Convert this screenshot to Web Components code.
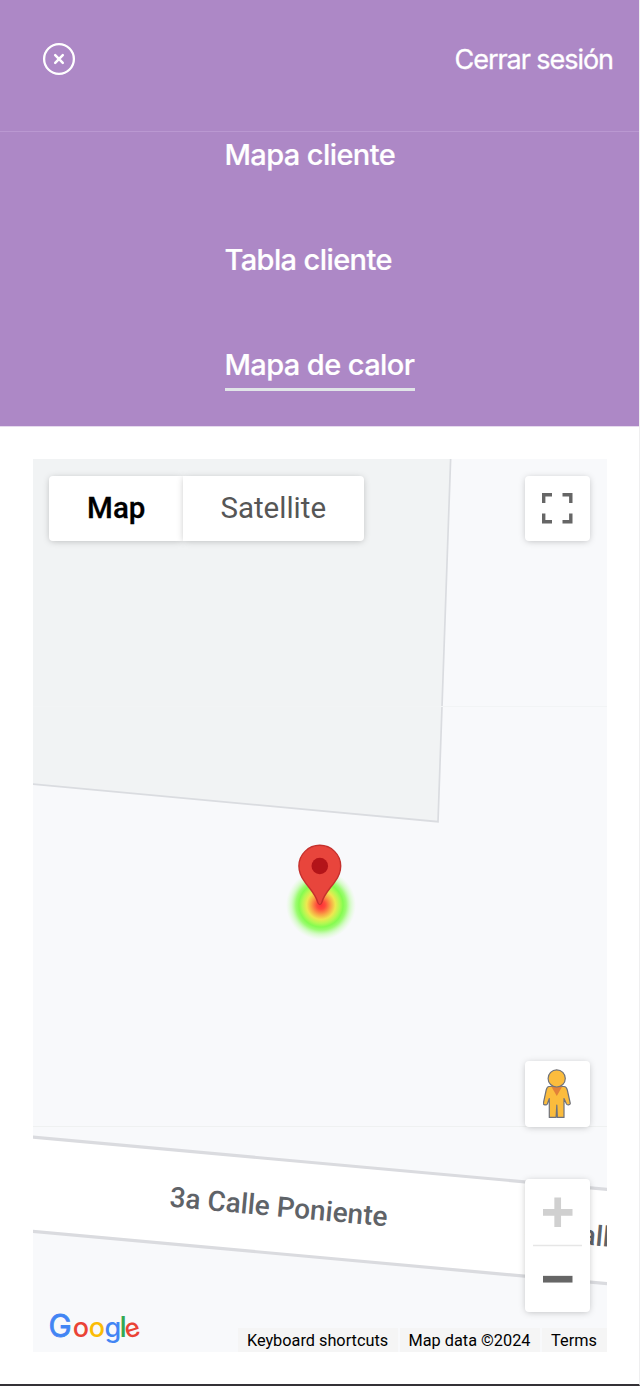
<!DOCTYPE html>
<html lang="es">
<head>
<meta charset="utf-8">
<title>Mapa de calor</title>
<style>
html, body { margin: 0; background: #fff; }
body { font-family: Inter, "Liberation Sans", sans-serif; }
</style>
</head>
<body>
<app-page>
  <app-header slot="header">Cerrar sesión</app-header>
  <app-nav slot="nav">
    <nav-item>Mapa cliente</nav-item>
    <nav-item>Tabla cliente</nav-item>
    <nav-item active>Mapa de calor</nav-item>
  </app-nav>
  <heat-map></heat-map>
</app-page>
<script>
function define(name, html) {
  const template = document.createElement('template');
  template.innerHTML = html;
  customElements.define(name, class extends HTMLElement {
    constructor() {
      super();
      this.attachShadow({ mode: 'open' }).append(template.content.cloneNode(true));
    }
  });
}

define('app-page', `
<style>
:host { display: flex; flex-direction: column; box-sizing: border-box; height: 1386px; overflow: hidden;
  background: #fff; border-right: 1px solid #efeff0; border-bottom: 2px solid #343136; }
.top { background: #ad88c6; margin-right: -1px; border-right: 1px solid #bb9bd0; height: 426px; border-bottom: 1px solid #e6daee; }
main { padding: 32px 32px 32px 33px; }
</style>
<div class="top"><slot name="header"></slot><slot name="nav"></slot></div>
<main><slot></slot></main>`);

define('app-header', `
<style>
:host { display: flex; box-sizing: border-box; height: 132px; padding: 42px 26px 0 42px; justify-content: space-between;
  align-items: flex-start; border-bottom: 1px solid #ba98d1; color: #fff; }
svg { display: block; }
.out { font-size: 27px; line-height: 34px; padding-top: 1px; letter-spacing: -1.05px; -webkit-text-stroke: .3px #fff; }
</style>
<svg width="34" height="34" viewBox="0 0 34 34" fill="none" stroke="#fff" stroke-linecap="round">
<circle cx="17" cy="17" r="14.9" stroke-width="2.3"/><path d="M13.2 13.2l7.6 7.6M20.8 13.2l-7.6 7.6" stroke-width="2.5"/></svg>
<span class="out"><slot></slot></span>`);

define('app-nav', `
<style>
:host { display: flex; flex-direction: column; align-items: flex-start; width: 190px; margin-left: 225px; gap: 58px; padding-top: 4px; }
</style><slot></slot>`);

define('nav-item', `
<style>
:host { display: block; box-sizing: border-box; height: 47px; padding-top: 1px; font-size: 29px; line-height: 36px; font-weight: 500;
  letter-spacing: -0.6px; text-indent: -.5px; white-space: nowrap; color: #fff; -webkit-text-stroke: .2px #fff; }
:host([active]) { width: 190px; height: 45px; border-bottom: 3px solid #e1e5e8; }
</style><slot></slot>`);

define('map-control', `
<style>
:host { display: flex; flex-direction: column; align-items: center; justify-content: center; box-sizing: border-box; width: 65px; height: 65px;
  background: #fff; border-radius: 4px; box-shadow: 0 1px 7px -1px rgba(0,0,0,.26); }
</style><slot></slot>`);

define('map-types', `
<style>
:host { display: flex; font: 29.5px/65px Roboto, sans-serif; color: #565656; height: 65px; }
span { box-sizing: border-box; background: #fff; box-shadow: 0 1px 7px -1px rgba(0,0,0,.26); text-align: center; }
.m { width: 133.5px; padding-left: 1px; color: #000; font-weight: 500; -webkit-text-stroke: .3px #000; border-radius: 4px 0 0 4px; }
.s { width: 181.5px; border-radius: 0 4px 4px 0; }
</style><span class="m">Map</span><span class="s">Satellite</span>`);

define('map-credits', `
<style>
:host { display: flex; gap: 2px; font: 16.3px/25px Roboto, sans-serif; color: #000; }
span { background: #f5f5f5; height: 24px; box-sizing: border-box; padding-right: 1px; text-align: center; white-space: nowrap; }
</style>
<span style="width:160px">Keyboard shortcuts</span><span style="width:140px">Map data ©2024</span><span style="width:65px">Terms</span>`);

define('map-canvas', `
<style>:host { display: block; } svg { display: block; }</style>
<svg width="574" height="893" viewBox="33 459 574 893">
<defs><radialGradient id="heat">
<stop offset="0" stop-color="#ff3038"/><stop offset=".12" stop-color="#ff4a3c"/><stop offset=".28" stop-color="#f9a545"/>
<stop offset=".41" stop-color="#eee850"/><stop offset=".53" stop-color="#b5f852"/><stop offset=".63" stop-color="#85fb50"/>
<stop offset=".72" stop-color="#90fc60" stop-opacity=".88"/><stop offset=".84" stop-color="#a5fc80" stop-opacity=".42"/><stop offset="1" stop-color="#c8ffb0" stop-opacity="0"/>
</radialGradient></defs>
<rect x="33" y="459" width="574" height="893" fill="#f8f9fb"/>
<path d="M31 457H450.7L438 821.7L31 784Z" fill="#f1f3f4" stroke="#dadce0" stroke-width="1.7"/>
<path d="M33 706.5H607" stroke="#f2f4f5"/><path d="M33 1126.5H607" stroke="#eff1f1"/>
<path d="M31 1137L609 1189.5V1283.8L31 1231.2Z" fill="#fff" stroke="#dadbdf" stroke-width="3.2"/>
<g font-family="Roboto, sans-serif" font-weight="500" font-size="28" fill="#5f6368">
<text transform="translate(169 1206.5) rotate(5.2)" textLength="218.5">3a Calle Poniente</text>
<text transform="translate(524 1239) rotate(5.2)" textLength="218.5">3a Calle Poniente</text></g>
<circle cx="321" cy="905" r="35" fill="url(#heat)"/>
<path d="M319.8 904.6C318.6 904.6 318.1 903.8 317.7 902.2C315.2 893.6 309.8 889 304.8 881.8C301.2 877.2 298.9 872 298.9 866A20.9 20.7 0 0 1 340.7 866C340.7 872 338.4 877.2 334.8 881.8C329.8 889 324.4 893.6 321.9 902.2C321.5 903.8 321 904.6 319.8 904.6Z" fill="#e8453c" stroke="#c5302c" stroke-width="1.4"/>
<circle cx="319.8" cy="866" r="8.3" fill="#b31419"/>
<text y="1337.3" font-family="Inter, sans-serif" font-size="27" font-weight="500"><tspan x="48.6" font-size="31" font-weight="400" fill="#4285f4" stroke="#4285f4" stroke-width=".8">G</tspan><tspan x="72.8" fill="#ea4335">o</tspan><tspan x="88.8" fill="#fbbc05">o</tspan><tspan x="104.6" fill="#4285f4">g</tspan><tspan x="119.4" font-size="29" fill="#34a853">l</tspan><tspan x="127" y="1338.8" font-size="26" fill="#ea4335" rotate="-16">e</tspan></text>
</svg>`);

define('heat-map', `
<style>
:host { display: block; position: relative; width: 574px; height: 893px; overflow: hidden; }
.overlay { position: absolute; inset: 0; display: flex; flex-direction: column; }
.bar { display: flex; justify-content: space-between; padding: 17px 17px 0 16px; }
.tools { display: flex; flex-direction: column; align-items: flex-end; gap: 52px; margin-top: auto; padding: 0 17px 16px 0; }
map-credits { align-self: flex-end; }
.zoom { height: 133px; }
svg { display: block; }
</style>
<map-canvas></map-canvas>
<div class="overlay">
<div class="bar"><map-types></map-types>
<map-control><svg width="31" height="31" viewBox="0.5 0.5 31 31" fill="none" stroke="#666" stroke-width="3.4"><path d="M2.2 10.5V2.2H10.5M21 2.2H29.3V10.5M21 29.3H29.3V21M10.5 29.3H2.2V21"/></svg></map-control></div>
<div class="tools">
<map-control style="height:66px"><svg width="30" height="50" viewBox="1 0 30 50" stroke="#6f727b" stroke-width="1.2" stroke-linejoin="round">
<path d="M7 17.5H22C24 17.5 24.8 19 25.3 21L28.3 34.5C28.2 36 25.2 36.3 24.5 35L22 29.5V48.4H15.4L14.8 36L14.1 48.4H7.3V29.5L5.3 35C4.5 36.5 1.5 36 1.3 34.5L4.2 21C4.7 19 5.3 17.5 7 17.5Z" fill="#fbbc3d"/>
<path d="M9.3 17.6H20.2L14.8 27Z" fill="#e28139" stroke="none"/><circle cx="14.7" cy="9.4" r="8.6" fill="#fbbc3d"/></svg></map-control>
<map-control class="zoom"><svg width="49" height="133" viewBox="0 0 49 133"><path d="M10 33.3H39.5M24.7 18.5V48" stroke="#d0d0d0" stroke-width="6.7"/><path d="M0 66.5H49" stroke="#e6e6e6" stroke-width="1.3"/><path d="M10 100.2H39.5" stroke="#666" stroke-width="6.7"/></svg></map-control>
</div>
<map-credits></map-credits>
</div>`);
</script>
</body>
</html>
